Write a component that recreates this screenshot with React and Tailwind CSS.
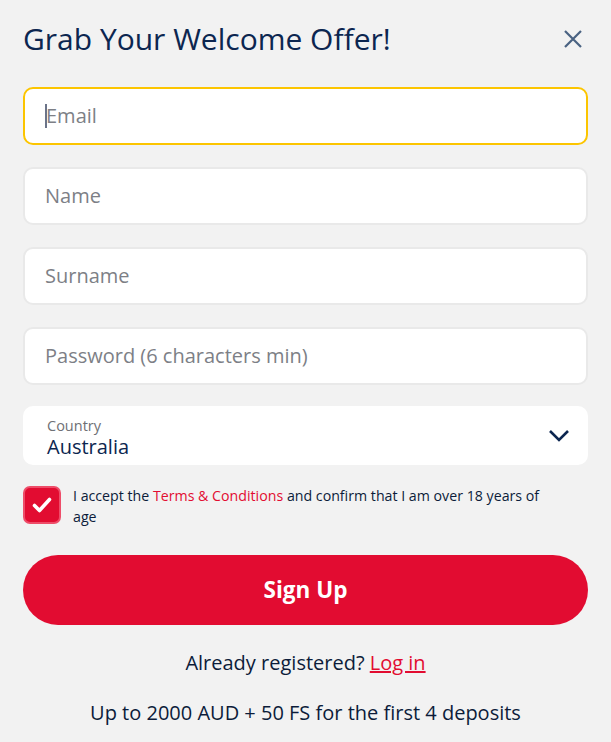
import React, { useState } from 'react';

const font = { fontFamily: '"Open Sans", "Noto Sans", sans-serif' };

const Field = ({ placeholder, focused }) => (
  <div
    className={
      'h-[58px] rounded-[10px] bg-white border-2 flex items-center px-[20px] ' +
      (focused ? 'border-[#fcc500]' : 'border-[#e9e9e9]')
    }
  >
    {focused && <span className="w-[2px] h-[24px] bg-[#6b7489] mr-[-1px]" />}
    <span className="text-[20px] text-[#7d7f86]">{placeholder}</span>
  </div>
);

export default function App() {
  const [accepted, setAccepted] = useState(true);

  return (
    <div className="min-h-screen bg-[#f2f2f2] px-[23px] pt-[17px] pb-4" style={font}>
      <div className="flex items-center justify-between">
        <h1 className="text-[30px] leading-[44px] text-[#0c2650]">Grab Your Welcome Offer!</h1>
        <button className="text-[#4a6282] mr-[5px]">
          <svg width="20" height="20" viewBox="0 0 20 20" fill="none" stroke="currentColor" strokeWidth="2.2">
            <path d="M2 2l16 16M18 2L2 18" />
          </svg>
        </button>
      </div>

      <div className="mt-[26px] flex flex-col gap-[22px]">
        <Field placeholder="Email" focused />
        <Field placeholder="Name" />
        <Field placeholder="Surname" />
        <Field placeholder="Password (6 characters min)" />
      </div>

      <div className="mt-[21px] h-[59px] rounded-[10px] bg-white flex items-center justify-between pl-[24px] pr-[18px]">
        <div className="flex flex-col pt-[4px]">
          <span className="text-[14.5px] leading-[18px] text-[#6f7075]">Country</span>
          <span className="text-[20px] leading-[23px] text-[#0c2650]">Australia</span>
        </div>
        <svg width="22" height="14" viewBox="0 0 22 14" fill="none" stroke="#0c2650" strokeWidth="2.6">
          <path d="M2 2l9 9 9-9" />
        </svg>
      </div>

      <div className="mt-[21px] flex items-start gap-[12px]">
        <button
          onClick={() => setAccepted(!accepted)}
          className="shrink-0 w-[38px] h-[38px] rounded-[7px] bg-[#e20c31] border-2 border-[#ee4d69] flex items-center justify-center"
        >
          {accepted && (
            <svg width="22" height="18" viewBox="0 0 22 18" fill="none" stroke="white" strokeWidth="3.6" strokeLinecap="round" strokeLinejoin="round">
              <path d="M3.5 9.5l5 5L18.5 3.5" />
            </svg>
          )}
        </button>
        <p className="max-w-[480px] text-[14.2px] leading-[21px] text-[#0c1c3a] mt-[-1px]">
          I accept the <a className="text-[#e20c31]">Terms &amp; Conditions</a> and confirm that I am over 18 years of age
        </p>
      </div>

      <button className="mt-[28px] w-full h-[70px] rounded-full bg-[#e20c31] text-white text-[22.5px] font-bold">
        Sign Up
      </button>

      <p className="mt-[24px] text-center text-[20px] leading-[28px] text-[#0c1c3a]">
        Already registered? <a className="text-[#e20c31] underline">Log in</a>
      </p>

      <p className="mt-[22px] text-center text-[20px] leading-[28px] text-[#0c1c3a]">
        Up to 2000 AUD + 50 FS for the first 4 deposits
      </p>
    </div>
  );
}
